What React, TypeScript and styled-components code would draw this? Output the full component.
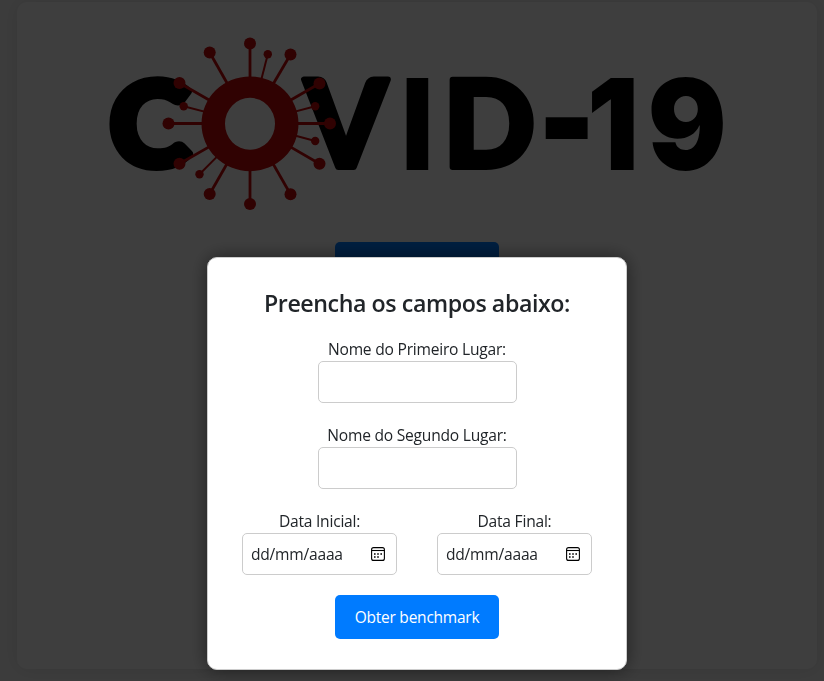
import React from 'react';
import styled, { createGlobalStyle } from 'styled-components';

const GlobalStyle = createGlobalStyle`
  *, *::before, *::after { box-sizing: border-box; }
  body {
    margin: 0;
    overflow: hidden;
    background: #f0f0f0;
    color: #212529;
    font: 400 15.6px/24px "Open Sans", sans-serif;
    letter-spacing: -0.23px;
  }
`;

const Page = styled.div`
  height: 681px;
  padding: 2px 7px 12px 17px;
`;

const Card = styled.main`
  height: 667px;
  padding-top: 28px;
  display: flex;
  flex-direction: column;
  align-items: center;
  background: #f8f8f8;
  border-radius: 10px;
  box-shadow: 0 0 20px rgba(0, 0, 0, 0.1);
`;

const Logo = styled.svg`
  display: block;
  width: 640px;
  height: 190px;
  flex: none;
  margin-bottom: 22px;
  letter-spacing: 0;
`;

const Letter = styled.text<{ $face: string; $weight?: number }>`
  font: 900 100px ${(p) => p.$face}, sans-serif;
  fill: #000;
  stroke: #000;
  stroke-width: ${(p) => p.$weight ?? 0};
  stroke-linejoin: round;
`;

const Button = styled.button`
  width: 164px;
  height: 44px;
  padding: 0;
  border: 0;
  border-radius: 5px;
  background: #007bff;
  color: #fff;
  font: 400 15.5px/24px "Open Sans", sans-serif;
  letter-spacing: -0.23px;
  cursor: pointer;
`;

const Overlay = styled.div`
  position: fixed;
  inset: 0;
  background: rgba(0, 0, 0, 0.75);
`;

const Modal = styled.form`
  position: fixed;
  top: 257px;
  left: 207px;
  width: 420px;
  height: 413px;
  padding-top: 31px;
  display: flex;
  flex-direction: column;
  align-items: center;
  background: #fff;
  border: 1px solid #ccc;
  border-radius: 10px;
  box-shadow: 0 0 20px rgba(0, 0, 0, 0.5);
`;

const Title = styled.h2`
  margin: 0 0 19px;
  font-size: 23.2px;
  font-weight: 600;
  line-height: 29px;
  letter-spacing: -0.42px;
`;

const Field = styled.label<{ $width: number }>`
  display: flex;
  flex-direction: column;
  align-items: center;
  width: ${(p) => p.$width}px;
  margin-bottom: 20px;
  white-space: nowrap;
`;

const Input = styled.input`
  width: 100%;
  height: 42px;
  padding: 8px;
  border: 1px solid #ccc;
  border-radius: 5px;
  background: #fff;
  font: inherit;
`;

const DateInput = styled.span`
  display: flex;
  align-items: center;
  justify-content: space-between;
  width: 100%;
  height: 42px;
  padding: 0 11px 0 8px;
  border: 1px solid #ccc;
  border-radius: 5px;
`;

const DateRow = styled.div`
  display: flex;
  gap: 40px;
`;

const letters = [
  { ch: 'C', face: 'Lato', weight: 7, m: '1.22 0 0 1.16 109.6 166.2' },
  { ch: 'V', face: 'Lato', weight: 5, m: '1.167 0 0 1.2 305 167' },
  { ch: 'I', face: 'Inter', m: '1.095 0 0 1.26 401.6 169.5' },
  { ch: 'D', face: 'Lato', weight: 5, m: '1.2 0 0 1.2 443.6 166.5' },
  { ch: '-', face: 'Inter', m: '1.23 0 0 1.47 537.6 170.8' },
  { ch: '1', face: 'Inter', m: '1.149 0 0 1.26 587 169.5' },
  { ch: '9', face: 'Inter', m: '1.177 0 0 1.253 647.5 169.8' },
];

const spikes = [
  [250, 43.5, 6], [290.5, 54.5, 6], [319.5, 83.5, 6], [330, 123.5, 6],
  [319.5, 163.7, 6], [290.5, 194.3, 6], [250, 204, 6], [209.7, 194, 6],
  [179.5, 163.7, 6], [168.5, 123.5, 6], [179.5, 83, 6], [209.7, 52.5, 6],
  [267.8, 54.3, 4.2], [315.2, 106.3, 4.2], [315.2, 141, 4.2],
  [199.5, 174.3, 4.2], [183.7, 106.3, 4.2],
];

function CovidLogo() {
  return (
    <Logo viewBox="97 30 640 190" role="img" aria-label="COVID-19">
      {letters.map((l) => (
        <Letter key={l.ch} $face={l.face} $weight={l.weight} transform={`matrix(${l.m})`}>
          {l.ch}
        </Letter>
      ))}
      <g fill="#c00808" stroke="#c00808">
        {spikes.map(([x, y, r]) => (
          <g key={`${x}-${y}`}>
            <line
              x1={250 + (x - 250) * 0.5}
              y1={123.5 + (y - 123.5) * 0.5}
              x2={x}
              y2={y}
              strokeWidth={r > 5 ? 2.8 : 2}
            />
            <circle cx={x} cy={y} r={r} stroke="none" />
          </g>
        ))}
        <path
          fillRule="evenodd"
          stroke="none"
          d="M201.5 123.8a48.5 47.3 0 1 0 97 0a48.5 47.3 0 1 0-97 0zM225 123.8a25 26 0 1 0 50 0a25 26 0 1 0-50 0z"
        />
      </g>
    </Logo>
  );
}

function CalendarIcon() {
  return (
    <svg width="14" height="14" viewBox="0 0 14 14" fill="none" stroke="#000" strokeWidth="1.1">
      <rect x=".6" y=".6" width="12.8" height="12.8" rx="2" />
      <path d="M.6 3.5h12.8" />
      <path d="M3 7h1.6M6.2 7h1.6M9.4 7H11M3 10h1.6M6.2 10h1.6" strokeWidth="1.6" />
    </svg>
  );
}

function DateField({ label }: { label: string }) {
  return (
    <Field as="div" $width={155}>
      {label}
      <DateInput>
        <span>dd/mm/aaaa</span>
        <CalendarIcon />
      </DateInput>
    </Field>
  );
}

export default function App() {
  return (
    <>
      <GlobalStyle />
      <Page>
        <Card>
          <CovidLogo />
          <Button type="button" />
        </Card>
      </Page>
      <Overlay />
      <Modal>
        <Title>Preencha os campos abaixo:</Title>
        <Field $width={199}>
          Nome do Primeiro Lugar:
          <Input type="text" />
        </Field>
        <Field $width={199}>
          Nome do Segundo Lugar:
          <Input type="text" />
        </Field>
        <DateRow>
          <DateField label="Data Inicial:" />
          <DateField label="Data Final:" />
        </DateRow>
        <Button type="button">Obter benchmark</Button>
      </Modal>
    </>
  );
}
